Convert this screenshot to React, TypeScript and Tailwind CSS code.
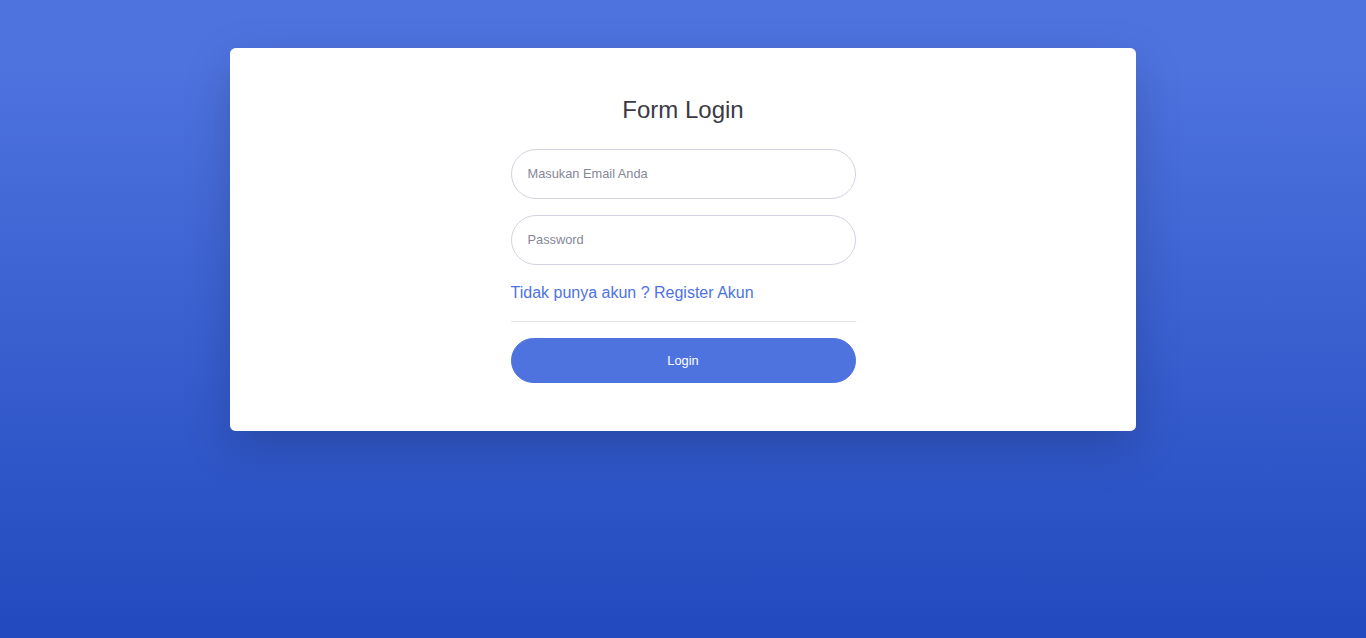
export default function App() {
  return (
    <div className="min-h-screen bg-[linear-gradient(180deg,#4e73df_10%,#224abe_100%)] pt-12 font-['Liberation_Sans',Arial,sans-serif]">
      <div className="mx-auto w-[906px] rounded-[5.6px] bg-white px-12 py-12 shadow-[0_16px_48px_rgba(0,0,0,0.175)]">
        <form className="mx-auto w-[345px]" onSubmit={(e) => e.preventDefault()}>
          <h1 className="mb-6 text-center text-[24px] leading-[1.2] text-[#3a3b45]">Form Login</h1>
          <div className="mb-4">
            <input
              type="email"
              placeholder="Masukan Email Anda"
              className="block h-[50px] w-full rounded-full border border-[#d1d3e2] px-4 text-[12.8px] text-[#6e707e] outline-none placeholder:text-[#858796]"
            />
          </div>
          <div className="mb-4">
            <input
              type="password"
              placeholder="Password"
              className="block h-[50px] w-full rounded-full border border-[#d1d3e2] px-4 text-[12.8px] text-[#6e707e] outline-none placeholder:text-[#858796]"
            />
          </div>
          <div className="mb-4">
            <a href="#" className="text-[16px] leading-6 text-[#4e73df]">
              Tidak punya akun ? Register Akun
            </a>
          </div>
          <hr className="mb-4 border-t border-[#e3e6f0]" />
          <button
            type="submit"
            className="block w-full rounded-full border border-[#4e73df] bg-[#4e73df] py-3 text-[12.8px] leading-[1.5] text-white"
          >
            Login
          </button>
        </form>
      </div>
    </div>
  );
}
